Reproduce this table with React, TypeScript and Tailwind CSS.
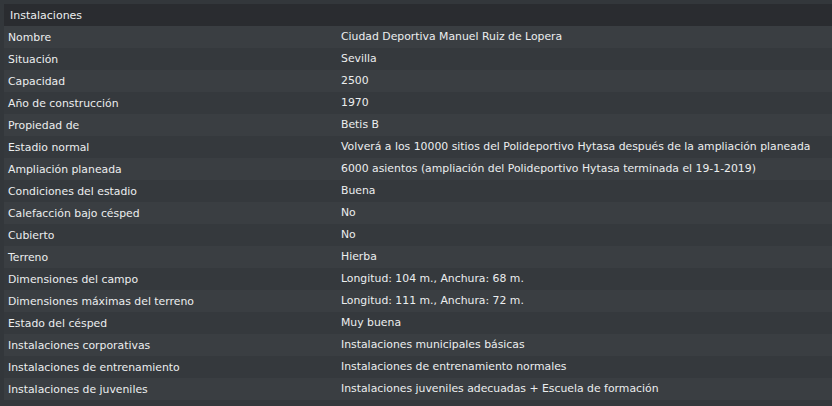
import React from "react";

const rows: [string, string][] = [
  ["Nombre", "Ciudad Deportiva Manuel Ruiz de Lopera"],
  ["Situación", "Sevilla"],
  ["Capacidad", "2500"],
  ["Año de construcción", "1970"],
  ["Propiedad de", "Betis B"],
  ["Estadio normal", "Volverá a los 10000 sitios del Polideportivo Hytasa después de la ampliación planeada"],
  ["Ampliación planeada", "6000 asientos (ampliación del Polideportivo Hytasa terminada el 19-1-2019)"],
  ["Condiciones del estadio", "Buena"],
  ["Calefacción bajo césped", "No"],
  ["Cubierto", "No"],
  ["Terreno", "Hierba"],
  ["Dimensiones del campo", "Longitud: 104 m., Anchura: 68 m."],
  ["Dimensiones máximas del terreno", "Longitud: 111 m., Anchura: 72 m."],
  ["Estado del césped", "Muy buena"],
  ["Instalaciones corporativas", "Instalaciones municipales básicas"],
  ["Instalaciones de entrenamiento", "Instalaciones de entrenamiento normales"],
  ["Instalaciones de juveniles", "Instalaciones juveniles adecuadas + Escuela de formación"],
];

export default function App() {
  return (
    <div
      className="w-[832px] h-[406px] bg-[#33373b] pt-1 pl-1 overflow-hidden text-[#eceeef] text-[10.85px]"
      style={{ fontFamily: '"DejaVu Sans", sans-serif' }}
    >
      <div className="h-[22px] bg-[#2a2c30] flex items-center pl-[6px] pt-[2px] text-[11px]">Instalaciones</div>
      {rows.map(([k, v], i) => (
        <div
          key={k}
          className={`h-[22px] flex items-center ${i % 2 === 0 ? "bg-[#3a3e42]" : "bg-[#35393d]"}`}
        >
          <div className="w-[337px] pl-1 shrink-0 pt-[2px]">{k}</div>
          <div className="whitespace-nowrap">{v}</div>
        </div>
      ))}
    </div>
  );
}
